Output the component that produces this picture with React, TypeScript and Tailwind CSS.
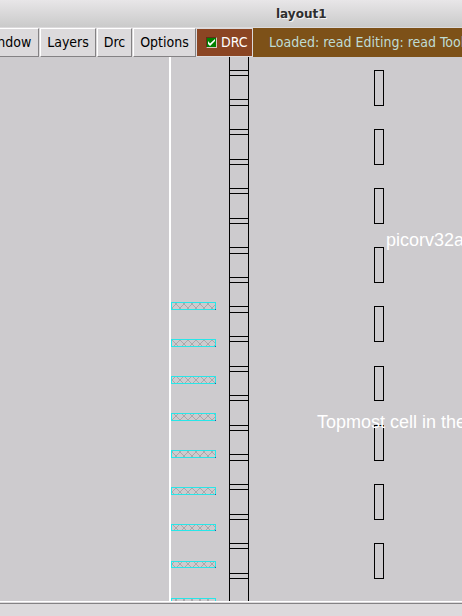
import React from "react";

const menus = [
  { label: "Window", width: "w-[65px]" },
  { label: "Layers", width: "w-[56px]" },
  { label: "Drc", width: "w-[35px]" },
  { label: "Options", width: "w-[63px]" },
];

const rungs = [
  70, 75, 99, 105, 129, 134, 159, 164, 188, 193, 218, 223, 247, 253, 277, 282,
  306, 312, 336, 341, 366, 371, 395, 400, 425, 430, 454, 460, 484, 489, 514,
  519, 543, 548, 573, 578,
].map((y) => y - 57);

const vias = [
  { y: 13, h: 36 },
  { y: 72, h: 36 },
  { y: 131, h: 36 },
  { y: 190, h: 36 },
  { y: 249, h: 36 },
  { y: 309, h: 35 },
  { y: 368, h: 36 },
  { y: 427, h: 36 },
  { y: 486, h: 36 },
];

const pins = [
  { y: 245, h: 8 },
  { y: 282, h: 8 },
  { y: 319, h: 8 },
  { y: 356, h: 8 },
  { y: 393, h: 8 },
  { y: 430, h: 8 },
  { y: 467, h: 7 },
  { y: 504, h: 7 },
  { y: 541, h: 7 },
];

function LayoutCanvas() {
  return (
    <svg className="block h-full w-full" role="img" aria-label="Cell layout">
      <defs>
        <pattern id="hatch" width="8" height="8" y="7" patternUnits="userSpaceOnUse">
          <g fill="#aaa7aa">
            <rect x="0" y="0" width="1" height="1" />
            <rect x="1" y="1" width="1" height="1" />
            <rect x="2" y="2" width="1" height="1" />
            <rect x="3" y="3" width="2" height="2" />
            <rect x="5" y="5" width="1" height="1" />
            <rect x="6" y="6" width="1" height="1" />
            <rect x="7" y="7" width="1" height="1" />
            <rect x="7" y="0" width="1" height="1" />
            <rect x="6" y="1" width="1" height="1" />
            <rect x="5" y="2" width="1" height="1" />
            <rect x="2" y="5" width="1" height="1" />
            <rect x="1" y="6" width="1" height="1" />
            <rect x="0" y="7" width="1" height="1" />
          </g>
        </pattern>
      </defs>
      <rect x="169" y="0" width="2" height="100%" fill="#fff" />
      {pins.map((p) => (
        <g key={p.y}>
          <rect x="171" y={p.y} width="45" height={p.h} fill="url(#hatch)" />
          <rect
            x="171.5"
            y={p.y + 0.5}
            width="44"
            height={p.h - 1}
            fill="none"
            stroke="#28e6e8"
          />
          <rect x="215" y={p.y + p.h - 1} width="1" height="1" fill="#2a5a9a" />
        </g>
      ))}
      <rect x="229" y="0" width="1" height="100%" fill="#000" />
      <rect x="248" y="0" width="1" height="100%" fill="#000" />
      {rungs.map((y) => (
        <rect key={y} x="230" y={y} width="18" height="1" fill="#000" />
      ))}
      {vias.map((v) => (
        <rect
          key={v.y}
          x="374.5"
          y={v.y + 0.5}
          width="9"
          height={v.h - 1}
          fill="none"
          stroke="#000"
        />
      ))}
      <g
        fill="#fff"
        className="text-[18px] [font-family:'Liberation_Sans',Arial,sans-serif]"
      >
        <text x="386" y="189">picorv32a</text>
        <text x="317" y="371">Topmost cell in the</text>
      </g>
    </svg>
  );
}

export default function App() {
  return (
    <div className="flex h-screen flex-col overflow-hidden bg-[#dcdadc] text-[14px] [font-family:'DejaVu_Sans_Condensed','DejaVu_Sans',sans-serif]">
      <header className="flex h-7 shrink-0 items-center border-b border-[#dcdadc] bg-linear-to-b from-[#e8e6e8] to-[#cacaca] pl-[276px]">
        <h1 className="text-[12px] font-bold text-[#2e2e2e] [font-family:'DejaVu_Sans',sans-serif] [text-shadow:1px_1px_0_#f4f4f4]">
          layout1
        </h1>
      </header>
      <div className="flex h-[29px] shrink-0 overflow-hidden">
        <nav className="-ml-[26px] flex shrink-0 gap-px pr-px">
          {menus.map((m) => (
            <button
              key={m.label}
              type="button"
              className={`${m.width} flex items-center justify-center border border-t-white border-r-[#848284] border-b-[#848284] border-l-white bg-[#dcdadc] text-black`}
            >
              {m.label}
            </button>
          ))}
        </nav>
        <label className="my-px mr-px flex w-[55px] shrink-0 items-center gap-1 bg-[#8b4523] pl-[9px] text-white">
          <span className="grid shrink-0">
            <input
              type="checkbox"
              defaultChecked
              className="col-start-1 row-start-1 size-[11px] appearance-none border border-t-[#5e3018] border-r-[#d8c8c0] border-b-[#d8c8c0] border-l-[#5e3018] bg-[#008000]"
            />
            <svg
              className="pointer-events-none col-start-1 row-start-1 size-[11px]"
              viewBox="0 0 11 11"
              aria-hidden="true"
            >
              <path d="M2 4v3l2 2 5-5V2L4 6.500z" fill="#fff" />
            </svg>
          </span>
          DRC
        </label>
        <div className="flex min-w-0 flex-1 items-center overflow-hidden bg-[#7d5118] pl-4 whitespace-nowrap text-[#bfdcd4]">
          Loaded: read Editing: read Tool: box
        </div>
      </div>
      <main className="min-h-0 flex-1 bg-[#cdcbce]">
        <LayoutCanvas />
      </main>
      <footer className="h-[15px] shrink-0 border-t border-white pt-px">
        <div className="h-px bg-[#848284]" />
      </footer>
    </div>
  );
}
